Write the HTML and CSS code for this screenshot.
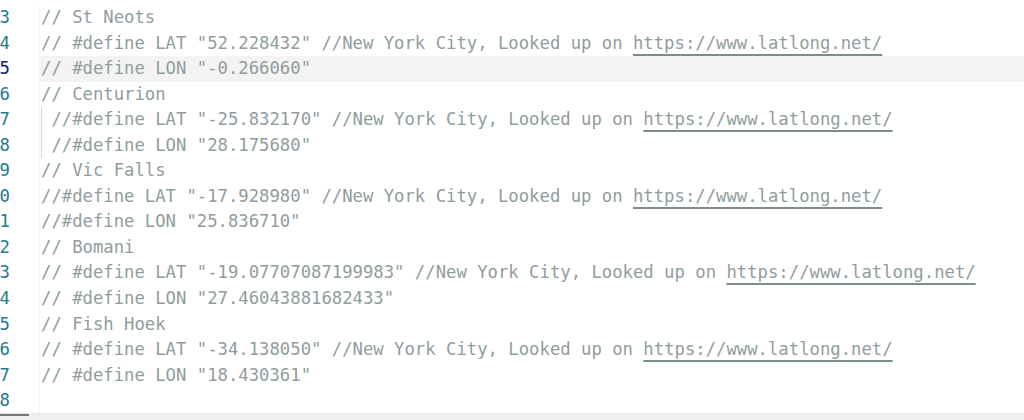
FILE: index.html
```html
<!DOCTYPE html>
<html lang="en">
<head>
    <meta charset="UTF-8">
    <title>Editor</title>
    <link rel="stylesheet" href="styles.css">
</head>
<body>

<div class="editor">
    <div class="gutter">
        <div class="num">13</div>
        <div class="num">14</div>
        <div class="num active">15</div>
        <div class="num">16</div>
        <div class="num">17</div>
        <div class="num">18</div>
        <div class="num">19</div>
        <div class="num">20</div>
        <div class="num">21</div>
        <div class="num">22</div>
        <div class="num">23</div>
        <div class="num">24</div>
        <div class="num">25</div>
        <div class="num">26</div>
        <div class="num">27</div>
        <div class="num">28</div>
    </div>
    <div class="code">
        <div class="line">// St Neots</div>
        <div class="line">// #define LAT "52.228432" //New York City, Looked up on <span class="link">https://www.latlong.net/</span></div>
        <div class="line current">// #define LON "-0.266060"</div>
        <div class="line">// Centurion</div>
        <div class="line guide"> //#define LAT "-25.832170" //New York City, Looked up on <span class="link">https://www.latlong.net/</span></div>
        <div class="line guide"> //#define LON "28.175680"</div>
        <div class="line">// Vic Falls</div>
        <div class="line">//#define LAT "-17.928980" //New York City, Looked up on <span class="link">https://www.latlong.net/</span></div>
        <div class="line">//#define LON "25.836710"</div>
        <div class="line">// Bomani</div>
        <div class="line">// #define LAT "-19.07707087199983" //New York City, Looked up on <span class="link">https://www.latlong.net/</span></div>
        <div class="line">// #define LON "27.46043881682433"</div>
        <div class="line">// Fish Hoek</div>
        <div class="line">// #define LAT "-34.138050" //New York City, Looked up on <span class="link">https://www.latlong.net/</span></div>
        <div class="line">// #define LON "18.430361"</div>
        <div class="line"></div>
    </div>
</div>

<div class="hscroll">
    <div class="thumb"></div>
</div>

</body>
</html>
```

FILE: styles.css
```css
body {
    margin: 0;
    padding: 0;
    background-color: white;
    font-family: 'DejaVu Sans Mono', 'Liberation Mono', monospace;
    font-size: 17.25px;
    overflow: hidden;
}
.editor {
    display: flex;
    padding-top: 5px;
    height: 413px;
    box-sizing: border-box;
}
.gutter {
    width: 40px;
    flex-shrink: 0;
    overflow: hidden;
    border-right: 1px solid #f2f4f4;
    box-sizing: border-box;
}
.num {
    height: 25.55px;
    line-height: 25.55px;
    margin-left: -11px;
    color: #237893;
    white-space: nowrap;
}
.num.active {
    color: #0b216f;
}
.code {
    flex: 1;
    padding-left: 1px;
}
.line {
    height: 25.55px;
    line-height: 25.55px;
    white-space: pre;
    color: #909d9d;
}
.line.current {
    background-color: #f3f3f3;
    margin-left: -1px;
    padding-left: 1px;
}
.line.guide {
    box-shadow: inset 1px 0 0 #d6d6d6;
}
.link {
    text-decoration: underline;
    text-decoration-color: #7f8c8c;
    text-decoration-thickness: 2px;
    text-underline-offset: 5px;
}
.hscroll {
    height: 7px;
    border-top: 1px solid #e4e6e6;
    background-color: #eef0f0;
    box-sizing: border-box;
}
.thumb {
    width: 29px;
    height: 2px;
    background-color: #777;
}
```
